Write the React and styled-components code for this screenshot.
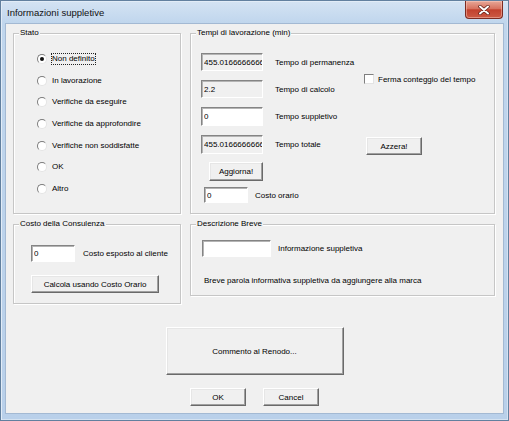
import styled, { createGlobalStyle } from 'styled-components';

const GlobalStyle = createGlobalStyle`
  html, body { margin: 0; padding: 0; background: #fff; }
  body {
    font-family: "Liberation Sans", Arial, sans-serif;
    font-size: 8px;
    color: #000;
  }
  * { box-sizing: border-box; }
`;

const Window = styled.div`
  width: 509px;
  height: 421px;
  display: flex;
  flex-direction: column;
  padding: 0 4px 6px 4px;
  border: 1px solid #62809f;
  background: linear-gradient(180deg, #d4e3f3 0px, #c0d6ed 22px, #b9d0ea 100%);
  box-shadow: inset 1px 1px 0 #e2ecf7, inset -1px -1px 0 #d4e2f1;
`;

const TitleBar = styled.div`
  height: 22px;
  display: flex;
  align-items: center;
  justify-content: space-between;
  padding-left: 2px;
`;

const Title = styled.span`
  font-size: 9.5px;
  color: #111;
`;

const CloseButton = styled.div`
  align-self: flex-start;
  width: 38px;
  height: 18px;
  margin-right: 1px;
  display: flex;
  align-items: center;
  justify-content: center;
  border: 1px solid #7d2b21;
  border-top: none;
  border-radius: 0 0 4px 4px;
  background: linear-gradient(180deg, #e7a898 0%, #d7725f 45%, #c2412d 52%, #cc5a44 100%);
  box-shadow: inset 0 0 0 1px rgba(255, 210, 200, 0.45);
`;

const Client = styled.div`
  flex: 1;
  display: flex;
  flex-direction: column;
  border: 1px solid #a3b9d3;
  background: #f0f0f0;
`;

const Groups = styled.div`
  display: grid;
  grid-template-columns: 168px 305px;
  column-gap: 9px;
  row-gap: 5px;
  align-items: start;
  margin: 4px 0 0 7px;
`;

const Group = styled.fieldset`
  margin: 0;
  padding: 0;
  min-width: 0;
  height: ${p => p.$h}px;
  border: 1px solid #c6c6c6;
  box-shadow: 1px 1px 0 #fff, inset 1px 1px 0 #fff;
`;

const Legend = styled.legend`
  margin-left: 5px;
  padding: 0 1px;
  line-height: 10px;
  background: #f0f0f0;
`;

const OptionList = styled.div`
  display: flex;
  flex-direction: column;
  gap: 9.7px;
  padding: 15px 0 0 23px;
`;

const Option = styled.div`
  height: 12px;
  display: flex;
  align-items: center;
`;

const RadioMark = styled.span`
  flex: none;
  width: 10px;
  height: 10px;
  border-radius: 50%;
  border: 1px solid;
  border-color: #7c7c7c #e4e4e4 #e4e4e4 #7c7c7c;
  background: #fff;
  display: flex;
  align-items: center;
  justify-content: center;

  &::after {
    content: '';
    width: 4px;
    height: 4px;
    border-radius: 50%;
    background: ${p => (p.$checked ? '#111' : 'transparent')};
  }
`;

const OptionText = styled.span`
  margin-left: 4px;
  line-height: 10px;
  border: 1px dotted ${p => (p.$focus ? '#222' : 'transparent')};
`;

const TimeBody = styled.div`
  display: flex;
  padding: 15px 0 0 10px;
`;

const TimeColumn = styled.div`
  width: 163px;
  display: flex;
  flex-direction: column;
`;

const Row = styled.div`
  display: flex;
  align-items: center;
  margin-top: ${p => p.$top || 0}px;
`;

const Field = styled.input`
  flex: none;
  width: ${p => p.$w}px;
  height: ${p => p.$h}px;
  margin-left: ${p => p.$left || 0}px;
  padding: 0 0 0 2px;
  border: 1px solid;
  border-color: #848484 #fff #fff #848484;
  box-shadow: inset 1px 1px 0 #b4b4b4;
  background: ${p => (p.readOnly ? '#f0f0f0' : '#fff')};
  font: 8px "Liberation Sans", Arial, sans-serif;
  color: #000;
  outline: none;
`;

const FieldLabel = styled.span`
  margin-left: ${p => p.$gap}px;
  white-space: nowrap;
`;

const Button = styled.button`
  flex: none;
  width: ${p => p.$w}px;
  height: ${p => p.$h}px;
  margin-left: ${p => p.$left || 0}px;
  margin-top: ${p => p.$top || 0}px;
  padding: 0;
  border: 1px solid;
  border-color: #fff #6a6a6a #6a6a6a #fff;
  box-shadow: inset -1px -1px 0 #a0a0a0, inset 1px 1px 0 #e6e6e6;
  background: #f0f0f0;
  font: 8px "Liberation Sans", Arial, sans-serif;
  color: #000;
`;

const SideColumn = styled.div`
  display: flex;
  flex-direction: column;
  align-items: flex-start;
  padding-top: 21px;
`;

const CheckRow = styled.div`
  display: flex;
  align-items: center;
  height: 10px;
  white-space: nowrap;
`;

const CheckMark = styled.span`
  flex: none;
  width: 10px;
  height: 10px;
  margin-right: 4px;
  border: 1px solid;
  border-color: #7f7f7f #e3e3e3 #e3e3e3 #7f7f7f;
  background: #fff;
`;

const CostBody = styled.div`
  display: flex;
  flex-direction: column;
  align-items: flex-start;
  padding: 16px 0 0 17px;
`;

const NoteBody = styled.div`
  padding: 11px 0 0 11px;
`;

const Hint = styled.p`
  margin: 19px 0 0 2px;
  line-height: 10px;
  white-space: nowrap;
`;

const Footer = styled.div`
  display: flex;
  flex-direction: column;
  align-items: center;
  margin-top: 23px;
`;

const FooterButtons = styled.div`
  display: flex;
  gap: 17px;
  margin-top: 13px;
`;

const states = [
  'Non definito',
  'In lavorazione',
  'Verifiche da eseguire',
  'Verifiche da approfondire',
  'Verifiche non soddisfatte',
  'OK',
  'Altro',
];

export default function App() {
  return (
    <>
      <GlobalStyle />
      <Window>
        <TitleBar>
          <Title>Informazioni suppletive</Title>
          <CloseButton>
            <svg width="12" height="10" viewBox="0 0 12 10">
              <path d="M2 1.5 L10 8.5 M10 1.5 L2 8.5" stroke="#5a1a12" strokeWidth="3.4" strokeLinecap="round" />
              <path d="M2 1.5 L10 8.5 M10 1.5 L2 8.5" stroke="#fff" strokeWidth="2" strokeLinecap="round" />
            </svg>
          </CloseButton>
        </TitleBar>
        <Client>
          <Groups>
            <Group $h={186}>
              <Legend>Stato</Legend>
              <OptionList>
                {states.map((s, i) => (
                  <Option key={s}>
                    <RadioMark $checked={i === 0} />
                    <OptionText $focus={i === 0}>{s}</OptionText>
                  </Option>
                ))}
              </OptionList>
            </Group>

            <Group $h={186}>
              <Legend>Tempi di lavorazione (min)</Legend>
              <TimeBody>
                <TimeColumn>
                  <Row>
                    <Field $w={62} $h={18} readOnly value="455.01666666666667" />
                    <FieldLabel $gap={12}>Tempo di permanenza</FieldLabel>
                  </Row>
                  <Row $top={9}>
                    <Field $w={62} $h={18} readOnly value="2.2" />
                    <FieldLabel $gap={12}>Tempo di calcolo</FieldLabel>
                  </Row>
                  <Row $top={9}>
                    <Field $w={62} $h={19} defaultValue="0" />
                    <FieldLabel $gap={12}>Tempo suppletivo</FieldLabel>
                  </Row>
                  <Row $top={9}>
                    <Field $w={62} $h={19} readOnly value="455.01666666666667" />
                    <FieldLabel $gap={12}>Tempo totale</FieldLabel>
                  </Row>
                  <Row $top={8}>
                    <Button $w={54} $h={19} $left={8}>Aggiorna!</Button>
                  </Row>
                  <Row $top={6}>
                    <Field $w={44} $h={16} $left={3} defaultValue="0" />
                    <FieldLabel $gap={7}>Costo orario</FieldLabel>
                  </Row>
                </TimeColumn>
                <SideColumn>
                  <CheckRow>
                    <CheckMark />
                    Ferma conteggio del tempo
                  </CheckRow>
                  <Button $w={56} $h={18} $left={2} $top={53}>Azzera!</Button>
                </SideColumn>
              </TimeBody>
            </Group>

            <Group $h={85}>
              <Legend>Costo della Consulenza</Legend>
              <CostBody>
                <Row>
                  <Field $w={44} $h={17} defaultValue="0" />
                  <FieldLabel $gap={8}>Costo esposto al cliente</FieldLabel>
                </Row>
                <Button $w={128} $h={18} $top={13}>Calcola usando Costo Orario</Button>
              </CostBody>
            </Group>

            <Group $h={77}>
              <Legend>Descrizione Breve</Legend>
              <NoteBody>
                <Row>
                  <Field $w={69} $h={17} defaultValue="" />
                  <FieldLabel $gap={7}>Informazione suppletiva</FieldLabel>
                </Row>
                <Hint>Breve parola informativa suppletiva da aggiungere alla marca</Hint>
              </NoteBody>
            </Group>
          </Groups>

          <Footer>
            <Button $w={178} $h={48}>Commento al Renodo...</Button>
            <FooterButtons>
              <Button $w={56} $h={18}>OK</Button>
              <Button $w={56} $h={18}>Cancel</Button>
            </FooterButtons>
          </Footer>
        </Client>
      </Window>
    </>
  );
}
